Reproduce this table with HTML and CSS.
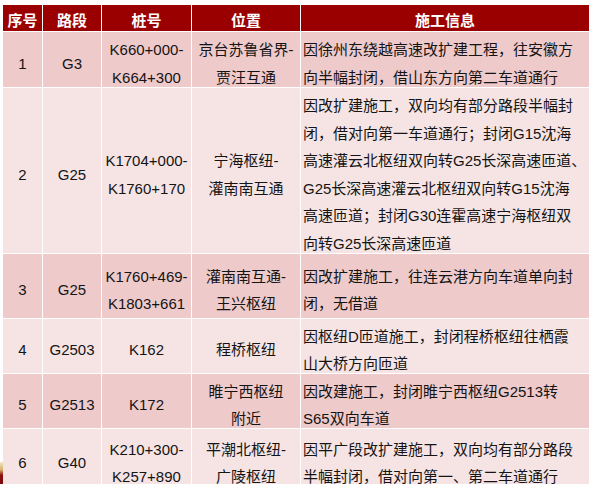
FILE: index.html
```html
<!DOCTYPE html>
<html lang="zh-CN">
<head>
<meta charset="utf-8">
<title>施工信息</title>
<link rel="stylesheet" href="styles.css">
</head>
<body>
<div class="page">
  <div class="table">
    <div class="cell head">序号</div>
    <div class="cell head">路段</div>
    <div class="cell head">桩号</div>
    <div class="cell head">位置</div>
    <div class="cell head">施工信息</div>

    <div class="cell odd">1</div>
    <div class="cell odd">G3</div>
    <div class="cell odd">K660+000-<br>K664+300</div>
    <div class="cell odd">京台苏鲁省界-<br>贾汪互通</div>
    <div class="cell odd info">因徐州东绕越高速改扩建工程，往安徽方<br>向半幅封闭，借山东方向第二车道通行</div>

    <div class="cell even">2</div>
    <div class="cell even">G25</div>
    <div class="cell even">K1704+000-<br>K1760+170</div>
    <div class="cell even">宁海枢纽-<br>灌南南互通</div>
    <div class="cell even info">因改扩建施工，双向均有部分路段半幅封<br>闭，借对向第一车道通行；封闭G15沈海<br>高速灌云北枢纽双向转G25长深高速匝道、<br>G25长深高速灌云北枢纽双向转G15沈海<br>高速匝道；封闭G30连霍高速宁海枢纽双<br>向转G25长深高速匝道</div>

    <div class="cell odd">3</div>
    <div class="cell odd">G25</div>
    <div class="cell odd">K1760+469-<br>K1803+661</div>
    <div class="cell odd">灌南南互通-<br>王兴枢纽</div>
    <div class="cell odd info">因改扩建施工，往连云港方向车道单向封<br>闭，无借道</div>

    <div class="cell even">4</div>
    <div class="cell even">G2503</div>
    <div class="cell even">K162</div>
    <div class="cell even">程桥枢纽</div>
    <div class="cell even info">因枢纽D匝道施工，封闭程桥枢纽往栖霞<br>山大桥方向匝道</div>

    <div class="cell odd">5</div>
    <div class="cell odd">G2513</div>
    <div class="cell odd">K172</div>
    <div class="cell odd">睢宁西枢纽<br>附近</div>
    <div class="cell odd info">因改建施工，封闭睢宁西枢纽G2513转<br>S65双向车道</div>

    <div class="cell even">6</div>
    <div class="cell even">G40</div>
    <div class="cell even">K210+300-<br>K257+890</div>
    <div class="cell even">平潮北枢纽-<br>广陵枢纽</div>
    <div class="cell even info">因平广段改扩建施工，双向均有部分路段<br>半幅封闭，借对向第一、第二车道通行</div>
  </div>
  <div class="corner"></div>
</div>
</body>
</html>
```

FILE: styles.css
```css
html, body {
  margin: 0;
  padding: 0;
  background: #ffffff;
}

.page {
  position: relative;
  width: 591px;
  height: 484px;
  overflow: hidden;
  padding: 5px 0 0 3px;
  box-sizing: border-box;
  font-family: "Liberation Sans", "Noto Sans CJK SC", sans-serif;
  font-size: 15px;
  color: #141414;
}

.table {
  display: grid;
  grid-template-columns: 39px 58px 89px 108px 288px;
  grid-template-rows: 26px 55px 165px 64px 54px 54px 60px;
  column-gap: 1px;
  row-gap: 1px;
  background: #ffffff;
}

.cell {
  display: flex;
  flex-direction: column;
  justify-content: center;
  align-items: center;
  text-align: center;
  line-height: 27.5px;
  padding-top: 8px;
  box-sizing: border-box;
  white-space: nowrap;
}

.head {
  background: #9a0000;
  color: #ffffff;
  font-weight: bold;
  line-height: 20px;
  padding-top: 6px;
}

.odd {
  background: #efcacb;
}

.even {
  background: #f6e4e5;
}

.info {
  align-items: flex-start;
  text-align: left;
  padding-left: 2px;
}

.corner {
  position: absolute;
  left: 0;
  top: 462px;
  width: 3px;
  height: 22px;
  background: linear-gradient(#f3e6c8, #d9b36a 35%, #8e1010 60%, #7a0a0a);
}
```
